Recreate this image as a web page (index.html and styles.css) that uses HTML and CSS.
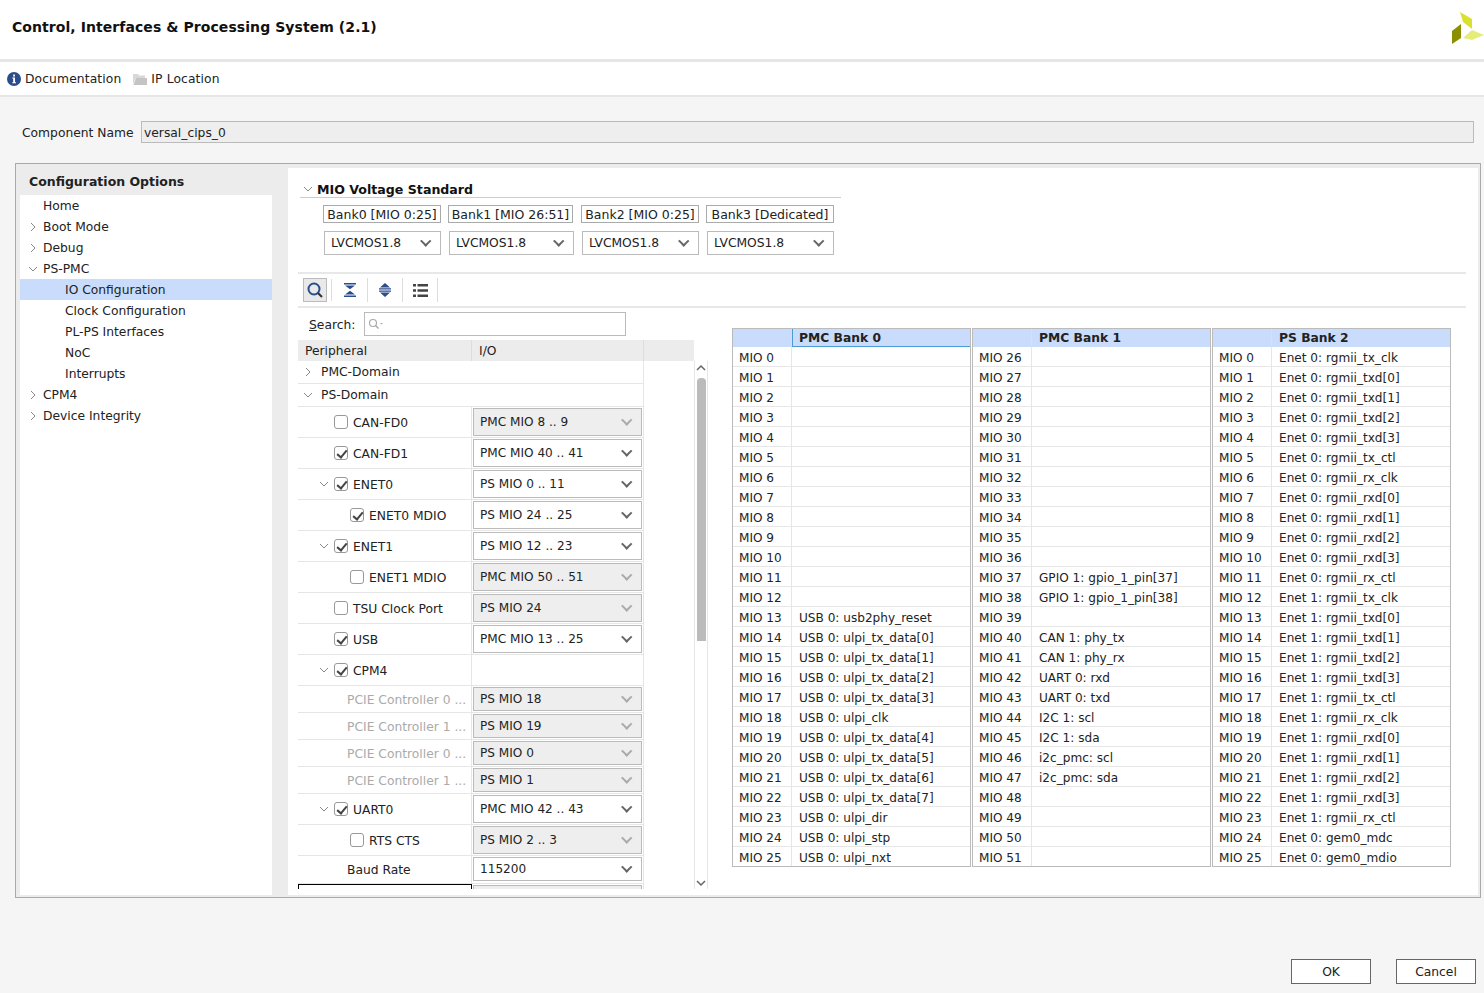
FILE: index.html
```html
<!DOCTYPE html>
<html lang="en">
<head>
  <meta charset="UTF-8">
  <title>Control, Interfaces &amp; Processing System (2.1)</title>
  <link rel="stylesheet" href="styles.css">
</head>
<body>

<svg class="defs" width="0" height="0">
  <symbol id="down" viewBox="0 0 10 10"><path d="M1 3l4 4 4-4" fill="none" stroke="#888" stroke-width="1"/></symbol>
  <symbol id="right" viewBox="0 0 10 10"><path d="M3 1l4 4-4 4" fill="none" stroke="#888" stroke-width="1"/></symbol>
</svg>

<header class="title-bar">
  <h1>Control, Interfaces &amp; Processing System (2.1)</h1>
  <svg class="logo" width="34" height="36" viewBox="0 0 34 36">
    <polygon points="10,4 22,11 22,21 13,14" fill="#d9e02f"/>
    <polygon points="2,23 11,16 11,30 2,36" fill="#8a8f00"/>
    <polygon points="22,22 34,27 22,32 13,30" fill="#e6ec78"/>
  </svg>
</header>

<nav class="link-bar">
  <a class="link">
    <svg width="14" height="14" viewBox="0 0 14 14"><circle cx="7" cy="7" r="7" fill="#2b4d8c"/><path d="M8 2.600v1.800H6.200V2.600zM8 5.400v4.900h1v1H5.300v-1h.9V6.400h-.9v-1z" fill="#fff"/></svg>
    Documentation
  </a>
  <a class="link">
    <svg width="14" height="12" viewBox="0 0 14 12"><path d="M0 1h5l1 1.500h6V5H3L0 11z" fill="#d8d8d8"/><path d="M3 5h11v7H0.500z" fill="#c4c4c4"/></svg>
    IP Location
  </a>
</nav>

<div class="name-row">
  <label>Component Name</label>
  <div class="name-input">versal_cips_0</div>
</div>

<main class="main-box">
  <aside class="side">
    <div class="side-head">Configuration Options</div>
    <ul class="nav-tree">
      <li>Home</li>
      <li><svg class="arrow"><use href="#right"/></svg>Boot Mode</li>
      <li><svg class="arrow"><use href="#right"/></svg>Debug</li>
      <li><svg class="arrow"><use href="#down"/></svg>PS-PMC</li>
      <li class="sub active">IO Configuration</li>
      <li class="sub">Clock Configuration</li>
      <li class="sub">PL-PS Interfaces</li>
      <li class="sub">NoC</li>
      <li class="sub">Interrupts</li>
      <li><svg class="arrow"><use href="#right"/></svg>CPM4</li>
      <li><svg class="arrow"><use href="#right"/></svg>Device Integrity</li>
    </ul>
  </aside>

  <section class="content">
    <div class="voltage-title"><svg class="arrow-sm"><use href="#down"/></svg>MIO Voltage Standard</div>
    <div class="bank-row">
      <div class="bank b0">Bank0 [MIO 0:25]</div>
      <div class="bank b1">Bank1 [MIO 26:51]</div>
      <div class="bank b2">Bank2 [MIO 0:25]</div>
      <div class="bank b3">Bank3 [Dedicated]</div>
    </div>
    <div class="volt-row">
      <div class="sel s0">LVCMOS1.8</div>
      <div class="sel s1">LVCMOS1.8</div>
      <div class="sel s0">LVCMOS1.8</div>
      <div class="sel s3">LVCMOS1.8</div>
    </div>

    <div class="tools">
      <button class="tool on">
        <svg width="18" height="18" viewBox="0 0 18 18"><circle cx="8" cy="8" r="5.500" fill="none" stroke="#2b4d8c" stroke-width="2"/><path d="M12 12l4 4" stroke="#333" stroke-width="2.200"/></svg>
      </button>
      <button class="tool">
        <svg width="12" height="14" viewBox="0 0 12 14"><path d="M0 0h12v1.600H0zM0 12.400h12V14H0zM1 2.400h10L6 6.300zM1 11.600h10L6 7.700z" fill="#2b4d8c"/></svg>
      </button>
      <button class="tool">
        <svg width="12" height="14" viewBox="0 0 12 14"><path d="M6 0l5 4.400H1zM6 14l-5-4.400h10zM0 5.300h12v1.300H0zM0 7.400h12v1.300H0z" fill="#2b4d8c"/></svg>
      </button>
      <button class="tool">
        <svg width="15" height="13" viewBox="0 0 15 13"><path d="M0 0h3v2.400H0zM4.500 0H15v2.400H4.500zM0 5.300h3v2.400H0zM4.500 5.300H15v2.400H4.500zM0 10.600h3V13H0zM4.500 10.600H15V13H4.500z" fill="#444"/></svg>
      </button>
    </div>

    <div class="lower">
      <div class="left-col">
        <div class="search">
          <label><u>S</u>earch:</label>
          <div class="search-box">
            <svg width="16" height="12" viewBox="0 0 16 12"><circle cx="5" cy="5" r="3.500" fill="none" stroke="#aaa" stroke-width="1.200"/><path d="M7.500 7.500l3 3" stroke="#aaa" stroke-width="1.400"/><path d="M12 5h3l-1.500 1.500z" fill="#aaa"/></svg>
          </div>
        </div>

        <div class="tree-wrap">
          <div class="tree-head">
            <div class="th th-a">Peripheral</div>
            <div class="th th-b">I/O</div>
          </div>
          <div class="tree-body">
            <div class="tree">
              <div class="row h-dom"><div class="span"><svg class="arrow l0"><use href="#right"/></svg>PMC-Domain</div></div>
              <div class="row h-dom"><div class="span"><svg class="arrow l0"><use href="#down"/></svg>PS-Domain</div></div>

              <div class="row"><div class="c1 i1"><span class="cb"></span>CAN-FD0</div><div class="c2"><div class="sel off">PMC MIO 8 .. 9</div></div></div>
              <div class="row"><div class="c1 i1"><span class="cb on"></span>CAN-FD1</div><div class="c2"><div class="sel">PMC MIO 40 .. 41</div></div></div>
              <div class="row"><div class="c1 i1"><svg class="arrow l1"><use href="#down"/></svg><span class="cb on"></span>ENET0</div><div class="c2"><div class="sel">PS MIO 0 .. 11</div></div></div>
              <div class="row"><div class="c1 i2"><span class="cb on"></span>ENET0 MDIO</div><div class="c2"><div class="sel">PS MIO 24 .. 25</div></div></div>
              <div class="row"><div class="c1 i1"><svg class="arrow l1"><use href="#down"/></svg><span class="cb on"></span>ENET1</div><div class="c2"><div class="sel">PS MIO 12 .. 23</div></div></div>
              <div class="row"><div class="c1 i2"><span class="cb"></span>ENET1 MDIO</div><div class="c2"><div class="sel off">PMC MIO 50 .. 51</div></div></div>
              <div class="row"><div class="c1 i1"><span class="cb"></span>TSU Clock Port</div><div class="c2"><div class="sel off">PS MIO 24</div></div></div>
              <div class="row"><div class="c1 i1"><span class="cb on"></span>USB</div><div class="c2"><div class="sel">PMC MIO 13 .. 25</div></div></div>
              <div class="row"><div class="c1 i1"><svg class="arrow l1"><use href="#down"/></svg><span class="cb on"></span>CPM4</div><div class="c2"></div></div>

              <div class="row short"><div class="c1 i3 dim">PCIE Controller 0 ...</div><div class="c2"><div class="sel off">PS MIO 18</div></div></div>
              <div class="row short"><div class="c1 i3 dim">PCIE Controller 1 ...</div><div class="c2"><div class="sel off">PS MIO 19</div></div></div>
              <div class="row short"><div class="c1 i3 dim">PCIE Controller 0 ...</div><div class="c2"><div class="sel off">PS MIO 0</div></div></div>
              <div class="row short"><div class="c1 i3 dim">PCIE Controller 1 ...</div><div class="c2"><div class="sel off">PS MIO 1</div></div></div>

              <div class="row"><div class="c1 i1"><svg class="arrow l1"><use href="#down"/></svg><span class="cb on"></span>UART0</div><div class="c2"><div class="sel">PMC MIO 42 .. 43</div></div></div>
              <div class="row"><div class="c1 i2"><span class="cb"></span>RTS CTS</div><div class="c2"><div class="sel off">PS MIO 2 .. 3</div></div></div>
              <div class="row baud"><div class="c1 i3">Baud Rate</div><div class="c2"><div class="sel">115200</div></div></div>
              <div class="row"><div class="c1 focus"></div><div class="c2"><div class="sel off"></div></div></div>
            </div>
            <div class="scroll">
              <svg class="sc-arrow" width="10" height="8" viewBox="0 0 10 8"><path d="M1 6l4-4 4 4" fill="none" stroke="#666" stroke-width="1.500"/></svg>
              <div class="thumb"></div>
              <svg class="sc-arrow sc-end" width="10" height="8" viewBox="0 0 10 8"><path d="M1 2l4 4 4-4" fill="none" stroke="#666" stroke-width="1.500"/></svg>
            </div>
          </div>
        </div>
      </div>

      <div class="banks">
        <table class="bank-table first">
          <thead><tr><th></th><th>PMC Bank 0</th></tr></thead>
          <tbody>
            <tr><td>MIO 0</td><td></td></tr>
            <tr><td>MIO 1</td><td></td></tr>
            <tr><td>MIO 2</td><td></td></tr>
            <tr><td>MIO 3</td><td></td></tr>
            <tr><td>MIO 4</td><td></td></tr>
            <tr><td>MIO 5</td><td></td></tr>
            <tr><td>MIO 6</td><td></td></tr>
            <tr><td>MIO 7</td><td></td></tr>
            <tr><td>MIO 8</td><td></td></tr>
            <tr><td>MIO 9</td><td></td></tr>
            <tr><td>MIO 10</td><td></td></tr>
            <tr><td>MIO 11</td><td></td></tr>
            <tr><td>MIO 12</td><td></td></tr>
            <tr><td>MIO 13</td><td>USB 0: usb2phy_reset</td></tr>
            <tr><td>MIO 14</td><td>USB 0: ulpi_tx_data[0]</td></tr>
            <tr><td>MIO 15</td><td>USB 0: ulpi_tx_data[1]</td></tr>
            <tr><td>MIO 16</td><td>USB 0: ulpi_tx_data[2]</td></tr>
            <tr><td>MIO 17</td><td>USB 0: ulpi_tx_data[3]</td></tr>
            <tr><td>MIO 18</td><td>USB 0: ulpi_clk</td></tr>
            <tr><td>MIO 19</td><td>USB 0: ulpi_tx_data[4]</td></tr>
            <tr><td>MIO 20</td><td>USB 0: ulpi_tx_data[5]</td></tr>
            <tr><td>MIO 21</td><td>USB 0: ulpi_tx_data[6]</td></tr>
            <tr><td>MIO 22</td><td>USB 0: ulpi_tx_data[7]</td></tr>
            <tr><td>MIO 23</td><td>USB 0: ulpi_dir</td></tr>
            <tr><td>MIO 24</td><td>USB 0: ulpi_stp</td></tr>
            <tr><td>MIO 25</td><td>USB 0: ulpi_nxt</td></tr>
          </tbody>
        </table>
        <table class="bank-table">
          <thead><tr><th></th><th>PMC Bank 1</th></tr></thead>
          <tbody>
            <tr><td>MIO 26</td><td></td></tr>
            <tr><td>MIO 27</td><td></td></tr>
            <tr><td>MIO 28</td><td></td></tr>
            <tr><td>MIO 29</td><td></td></tr>
            <tr><td>MIO 30</td><td></td></tr>
            <tr><td>MIO 31</td><td></td></tr>
            <tr><td>MIO 32</td><td></td></tr>
            <tr><td>MIO 33</td><td></td></tr>
            <tr><td>MIO 34</td><td></td></tr>
            <tr><td>MIO 35</td><td></td></tr>
            <tr><td>MIO 36</td><td></td></tr>
            <tr><td>MIO 37</td><td>GPIO 1: gpio_1_pin[37]</td></tr>
            <tr><td>MIO 38</td><td>GPIO 1: gpio_1_pin[38]</td></tr>
            <tr><td>MIO 39</td><td></td></tr>
            <tr><td>MIO 40</td><td>CAN 1: phy_tx</td></tr>
            <tr><td>MIO 41</td><td>CAN 1: phy_rx</td></tr>
            <tr><td>MIO 42</td><td>UART 0: rxd</td></tr>
            <tr><td>MIO 43</td><td>UART 0: txd</td></tr>
            <tr><td>MIO 44</td><td>I2C 1: scl</td></tr>
            <tr><td>MIO 45</td><td>I2C 1: sda</td></tr>
            <tr><td>MIO 46</td><td>i2c_pmc: scl</td></tr>
            <tr><td>MIO 47</td><td>i2c_pmc: sda</td></tr>
            <tr><td>MIO 48</td><td></td></tr>
            <tr><td>MIO 49</td><td></td></tr>
            <tr><td>MIO 50</td><td></td></tr>
            <tr><td>MIO 51</td><td></td></tr>
          </tbody>
        </table>
        <table class="bank-table">
          <thead><tr><th></th><th>PS Bank 2</th></tr></thead>
          <tbody>
            <tr><td>MIO 0</td><td>Enet 0: rgmii_tx_clk</td></tr>
            <tr><td>MIO 1</td><td>Enet 0: rgmii_txd[0]</td></tr>
            <tr><td>MIO 2</td><td>Enet 0: rgmii_txd[1]</td></tr>
            <tr><td>MIO 3</td><td>Enet 0: rgmii_txd[2]</td></tr>
            <tr><td>MIO 4</td><td>Enet 0: rgmii_txd[3]</td></tr>
            <tr><td>MIO 5</td><td>Enet 0: rgmii_tx_ctl</td></tr>
            <tr><td>MIO 6</td><td>Enet 0: rgmii_rx_clk</td></tr>
            <tr><td>MIO 7</td><td>Enet 0: rgmii_rxd[0]</td></tr>
            <tr><td>MIO 8</td><td>Enet 0: rgmii_rxd[1]</td></tr>
            <tr><td>MIO 9</td><td>Enet 0: rgmii_rxd[2]</td></tr>
            <tr><td>MIO 10</td><td>Enet 0: rgmii_rxd[3]</td></tr>
            <tr><td>MIO 11</td><td>Enet 0: rgmii_rx_ctl</td></tr>
            <tr><td>MIO 12</td><td>Enet 1: rgmii_tx_clk</td></tr>
            <tr><td>MIO 13</td><td>Enet 1: rgmii_txd[0]</td></tr>
            <tr><td>MIO 14</td><td>Enet 1: rgmii_txd[1]</td></tr>
            <tr><td>MIO 15</td><td>Enet 1: rgmii_txd[2]</td></tr>
            <tr><td>MIO 16</td><td>Enet 1: rgmii_txd[3]</td></tr>
            <tr><td>MIO 17</td><td>Enet 1: rgmii_tx_ctl</td></tr>
            <tr><td>MIO 18</td><td>Enet 1: rgmii_rx_clk</td></tr>
            <tr><td>MIO 19</td><td>Enet 1: rgmii_rxd[0]</td></tr>
            <tr><td>MIO 20</td><td>Enet 1: rgmii_rxd[1]</td></tr>
            <tr><td>MIO 21</td><td>Enet 1: rgmii_rxd[2]</td></tr>
            <tr><td>MIO 22</td><td>Enet 1: rgmii_rxd[3]</td></tr>
            <tr><td>MIO 23</td><td>Enet 1: rgmii_rx_ctl</td></tr>
            <tr><td>MIO 24</td><td>Enet 0: gem0_mdc</td></tr>
            <tr><td>MIO 25</td><td>Enet 0: gem0_mdio</td></tr>
          </tbody>
        </table>
      </div>
    </div>
  </section>
</main>

<footer class="actions">
  <button class="btn">OK</button>
  <button class="btn">Cancel</button>
</footer>

</body>
</html>
```

FILE: styles.css
```css
* {
  box-sizing: border-box;
}

html, body {
  margin: 0;
  height: 993px;
  overflow: hidden;
}

body {
  font-family: 'DejaVu Sans', sans-serif;
  font-size: 12.3px;
  color: #222;
  background-color: #f5f5f5;
}

.defs {
  display: block;
  height: 0;
}

.title-bar {
  display: flex;
  align-items: center;
  justify-content: space-between;
  height: 62px;
  padding-left: 12px;
  background-color: #fff;
  border-bottom: 3px solid #e6e6e6;
}

.title-bar h1 {
  margin: 0 0 5px;
  font-size: 14px;
  font-weight: bold;
  color: #111;
  letter-spacing: 0.07px;
}

.logo {
  margin-bottom: 7px;
}

.link-bar {
  display: flex;
  align-items: center;
  gap: 12px;
  height: 35px;
  padding: 1px 0 0 7px;
  background-color: #fff;
  border-bottom: 2px solid #e6e6e6;
  letter-spacing: 0.12px;
}

.link {
  display: flex;
  align-items: center;
  gap: 4px;
}

.name-row {
  display: flex;
  align-items: center;
  height: 22px;
  margin: 24px 10px 0 22px;
}

.name-row label {
  width: 119px;
  padding-top: 2px;
}

.name-input {
  flex: 1;
  height: 22px;
  line-height: 22px;
  padding-left: 2px;
  background-color: #eee;
  border: 1px solid #bbb;
}

.main-box {
  display: flex;
  width: 1466px;
  height: 735px;
  margin: 20px 0 0 15px;
  padding: 3px 2px 2px 4px;
  background-color: #ececec;
  border: 1px solid #aaa;
}

.side {
  width: 252px;
  background-color: #fff;
  flex: none;
}

.side-head {
  height: 28px;
  line-height: 29px;
  padding-left: 9px;
  font-size: 12.5px;
  font-weight: bold;
  background-color: #ececec;
}

.nav-tree {
  list-style: none;
  margin: 0;
  padding: 0;
}

.nav-tree li {
  position: relative;
  height: 21px;
  line-height: 23px;
  padding-left: 23px;
}

.nav-tree li.sub {
  padding-left: 45px;
}

.nav-tree li.active {
  background-color: #c9dcfb;
}

.arrow {
  position: absolute;
  left: 8px;
  top: 6px;
  width: 10px;
  height: 10px;
}

.arrow-sm {
  width: 10px;
  height: 10px;
  margin-right: 4px;
}

.content {
  flex: 1;
  margin: 1px 0 0 16px;
  padding-left: 10px;
  background-color: #fff;
}

.voltage-title {
  display: flex;
  align-items: center;
  width: 541px;
  height: 30px;
  padding: 13px 0 0 3px;
  margin-left: 2px;
  font-weight: bold;
  font-size: 12.6px;
  color: #111;
  border-bottom: 1px solid #ccc;
}

.bank-row {
  display: flex;
  gap: 7px;
  margin: 7px 0 0 25px;
  font-size: 12.5px;
}

.volt-row {
  display: flex;
  gap: 8px;
  margin: 8px 0 0 26px;
}

.volt-row .sel {
  height: 24px;
}

.b0, .b2 {
  width: 118px;
}

.b1 {
  width: 125px;
  margin-right: 1px;
}

.b3 {
  width: 128px;
}

.s0 {
  width: 117px;
}

.s1 {
  width: 125px;
}

.s3 {
  width: 127px;
}

.bank {
  height: 18px;
  line-height: 17px;
  text-align: center;
  border: 1px solid #aaa;
  white-space: nowrap;
}

.sel {
  position: relative;
  display: flex;
  align-items: center;
  height: 100%;
  padding: 0 6px;
  background-color: #fff;
  border: 1px solid #bbb;
  white-space: nowrap;
}

.sel::after {
  content: "";
  position: absolute;
  right: 11px;
  top: 50%;
  width: 5.500px;
  height: 5.500px;
  margin-top: -6px;
  border-right: 2px solid #666;
  border-bottom: 2px solid #666;
  transform: rotate(45deg);
}

.sel.off {
  background-color: #eee;
}

.sel.off::after {
  border-color: #aaa;
}

.tools {
  display: flex;
  align-items: center;
  height: 36px;
  margin-top: 17px;
  margin-right: 12px;
  padding-left: 5px;
  border-top: 2px solid #e8e8e8;
  border-bottom: 2px solid #e8e8e8;
}

.tool {
  display: flex;
  align-items: center;
  justify-content: center;
  width: 35px;
  height: 24px;
  padding: 0;
  background: none;
  border: none;
  border-right: 1px solid #ddd;
}

.tool.on {
  position: relative;
  width: 24px;
  margin-right: 6px;
  border: 1px solid #bbb;
  background-color: #e9e9e9;
}

.tool.on::after {
  content: "";
  position: absolute;
  right: -6px;
  top: 0;
  height: 22px;
  border-right: 1px solid #ddd;
}

.lower {
  display: flex;
}

.left-col {
  width: 410px;
  flex: none;
}

.search {
  display: flex;
  align-items: center;
  height: 24px;
  margin-top: 4px;
  padding-left: 11px;
}

.search label {
  width: 55px;
  padding-top: 2px;
}

.search-box {
  display: flex;
  align-items: center;
  width: 262px;
  height: 24px;
  padding-left: 3px;
  border: 1px solid #bbb;
}

.tree-wrap {
  margin-top: 4px;
}

.tree-head {
  display: flex;
  width: 396px;
  height: 21px;
  background-color: #ececec;
}

.th {
  line-height: 23px;
  padding-left: 7px;
  border-right: 1px solid #ddd;
}

.th-a {
  width: 174px;
}

.th-b {
  width: 172px;
}

.tree-body {
  display: flex;
  height: 528px;
  overflow: hidden;
}

.tree {
  width: 346px;
  flex: none;
  border-right: 1px solid #e6e6e6;
}

.row {
  display: flex;
  height: 31px;
  border-bottom: 1px solid #e6e6e6;
}

.row.short {
  height: 27px;
}

.row.baud {
  height: 28px;
}

.row.baud .c1 {
  padding-top: 0;
}

.row.baud .c2 {
  padding-bottom: 2px;
}

.row.h-dom {
  height: 23px;
}

.span {
  position: relative;
  flex: 1;
  line-height: 23px;
  padding-left: 23px;
}

.c1 {
  position: relative;
  display: flex;
  align-items: center;
  width: 174px;
  padding-top: 2px;
  border-right: 1px solid #e6e6e6;
  white-space: nowrap;
}

.c2 {
  width: 171px;
  padding: 1px;
  font-size: 12.1px;
}

.i1 {
  padding-left: 36px;
}

.i2 {
  padding-left: 52px;
}

.i3 {
  padding-left: 49px;
}

.dim {
  color: #aaa;
}

.focus {
  border: 1px solid #000;
  border-bottom: none;
}

.arrow.l0 {
  left: 5px;
  top: 6px;
}

.arrow.l1 {
  left: 21px;
  top: 10px;
}

.cb {
  position: relative;
  flex: none;
  width: 14px;
  height: 14px;
  margin-top: -2px;
  margin-right: 5px;
  background-color: #fff;
  border: 1px solid #999;
  border-radius: 3px;
}

.cb.on::after {
  content: "";
  position: absolute;
  left: 4px;
  top: 1px;
  width: 4px;
  height: 8px;
  border-right: 2px solid #444;
  border-bottom: 2px solid #444;
  transform: rotate(40deg);
}

.scroll {
  position: relative;
  width: 14px;
  margin-left: 50px;
  display: flex;
  flex-direction: column;
  align-items: center;
  border-left: 1px solid #e6e6e6;
  border-right: 1px solid #e6e6e6;
}

.sc-arrow {
  margin-top: 3px;
  flex: none;
}

.thumb {
  width: 9px;
  height: 263px;
  margin-top: 6px;
  background-color: #bbb;
  border-radius: 4px 4px 0 0;
}

.sc-end {
  position: absolute;
  bottom: 2px;
  left: 1px;
}

.banks {
  display: flex;
  gap: 1px;
  margin: 20px 0 0 24px;
  align-items: flex-start;
}

.bank-table {
  width: 239px;
  border-collapse: separate;
  border-spacing: 0;
  border: 1px solid #bbb;
  table-layout: fixed;
  font-size: 12.1px;
}

.bank-table th {
  height: 18px;
  padding: 1px 0 0 7px;
  text-align: left;
  font-size: 12.3px;
  font-weight: bold;
  line-height: 16px;
  background-color: #c9dcfb;
  border-right: 1px solid #e0e0e0;
  border-bottom: 1px solid #c9dcfb;
}

.bank-table th:first-child {
  width: 59px;
}

.bank-table th:last-child {
  border-right: none;
}

.bank-table.first th:last-child {
  padding-left: 6px;
  border-left: 1px solid #4a9bd6;
  border-bottom: 1px solid #4a9bd6;
}

.bank-table td {
  height: 20px;
  padding: 3px 0 0 6px;
  line-height: 16px;
  border-bottom: 1px solid #e6e6e6;
  white-space: nowrap;
}

.bank-table td:first-child {
  border-right: 1px solid #e6e6e6;
}

.bank-table td:last-child {
  padding-left: 7px;
}

.bank-table tr:last-child td {
  height: 19px;
  border-bottom: none;
}

.actions {
  display: flex;
  justify-content: flex-end;
  gap: 25px;
  margin: 61px 8px 0 0;
}

.btn {
  width: 80px;
  height: 25px;
  padding: 0;
  font: inherit;
  color: #222;
  background-color: #fff;
  border: 1px solid #666;
}
```
